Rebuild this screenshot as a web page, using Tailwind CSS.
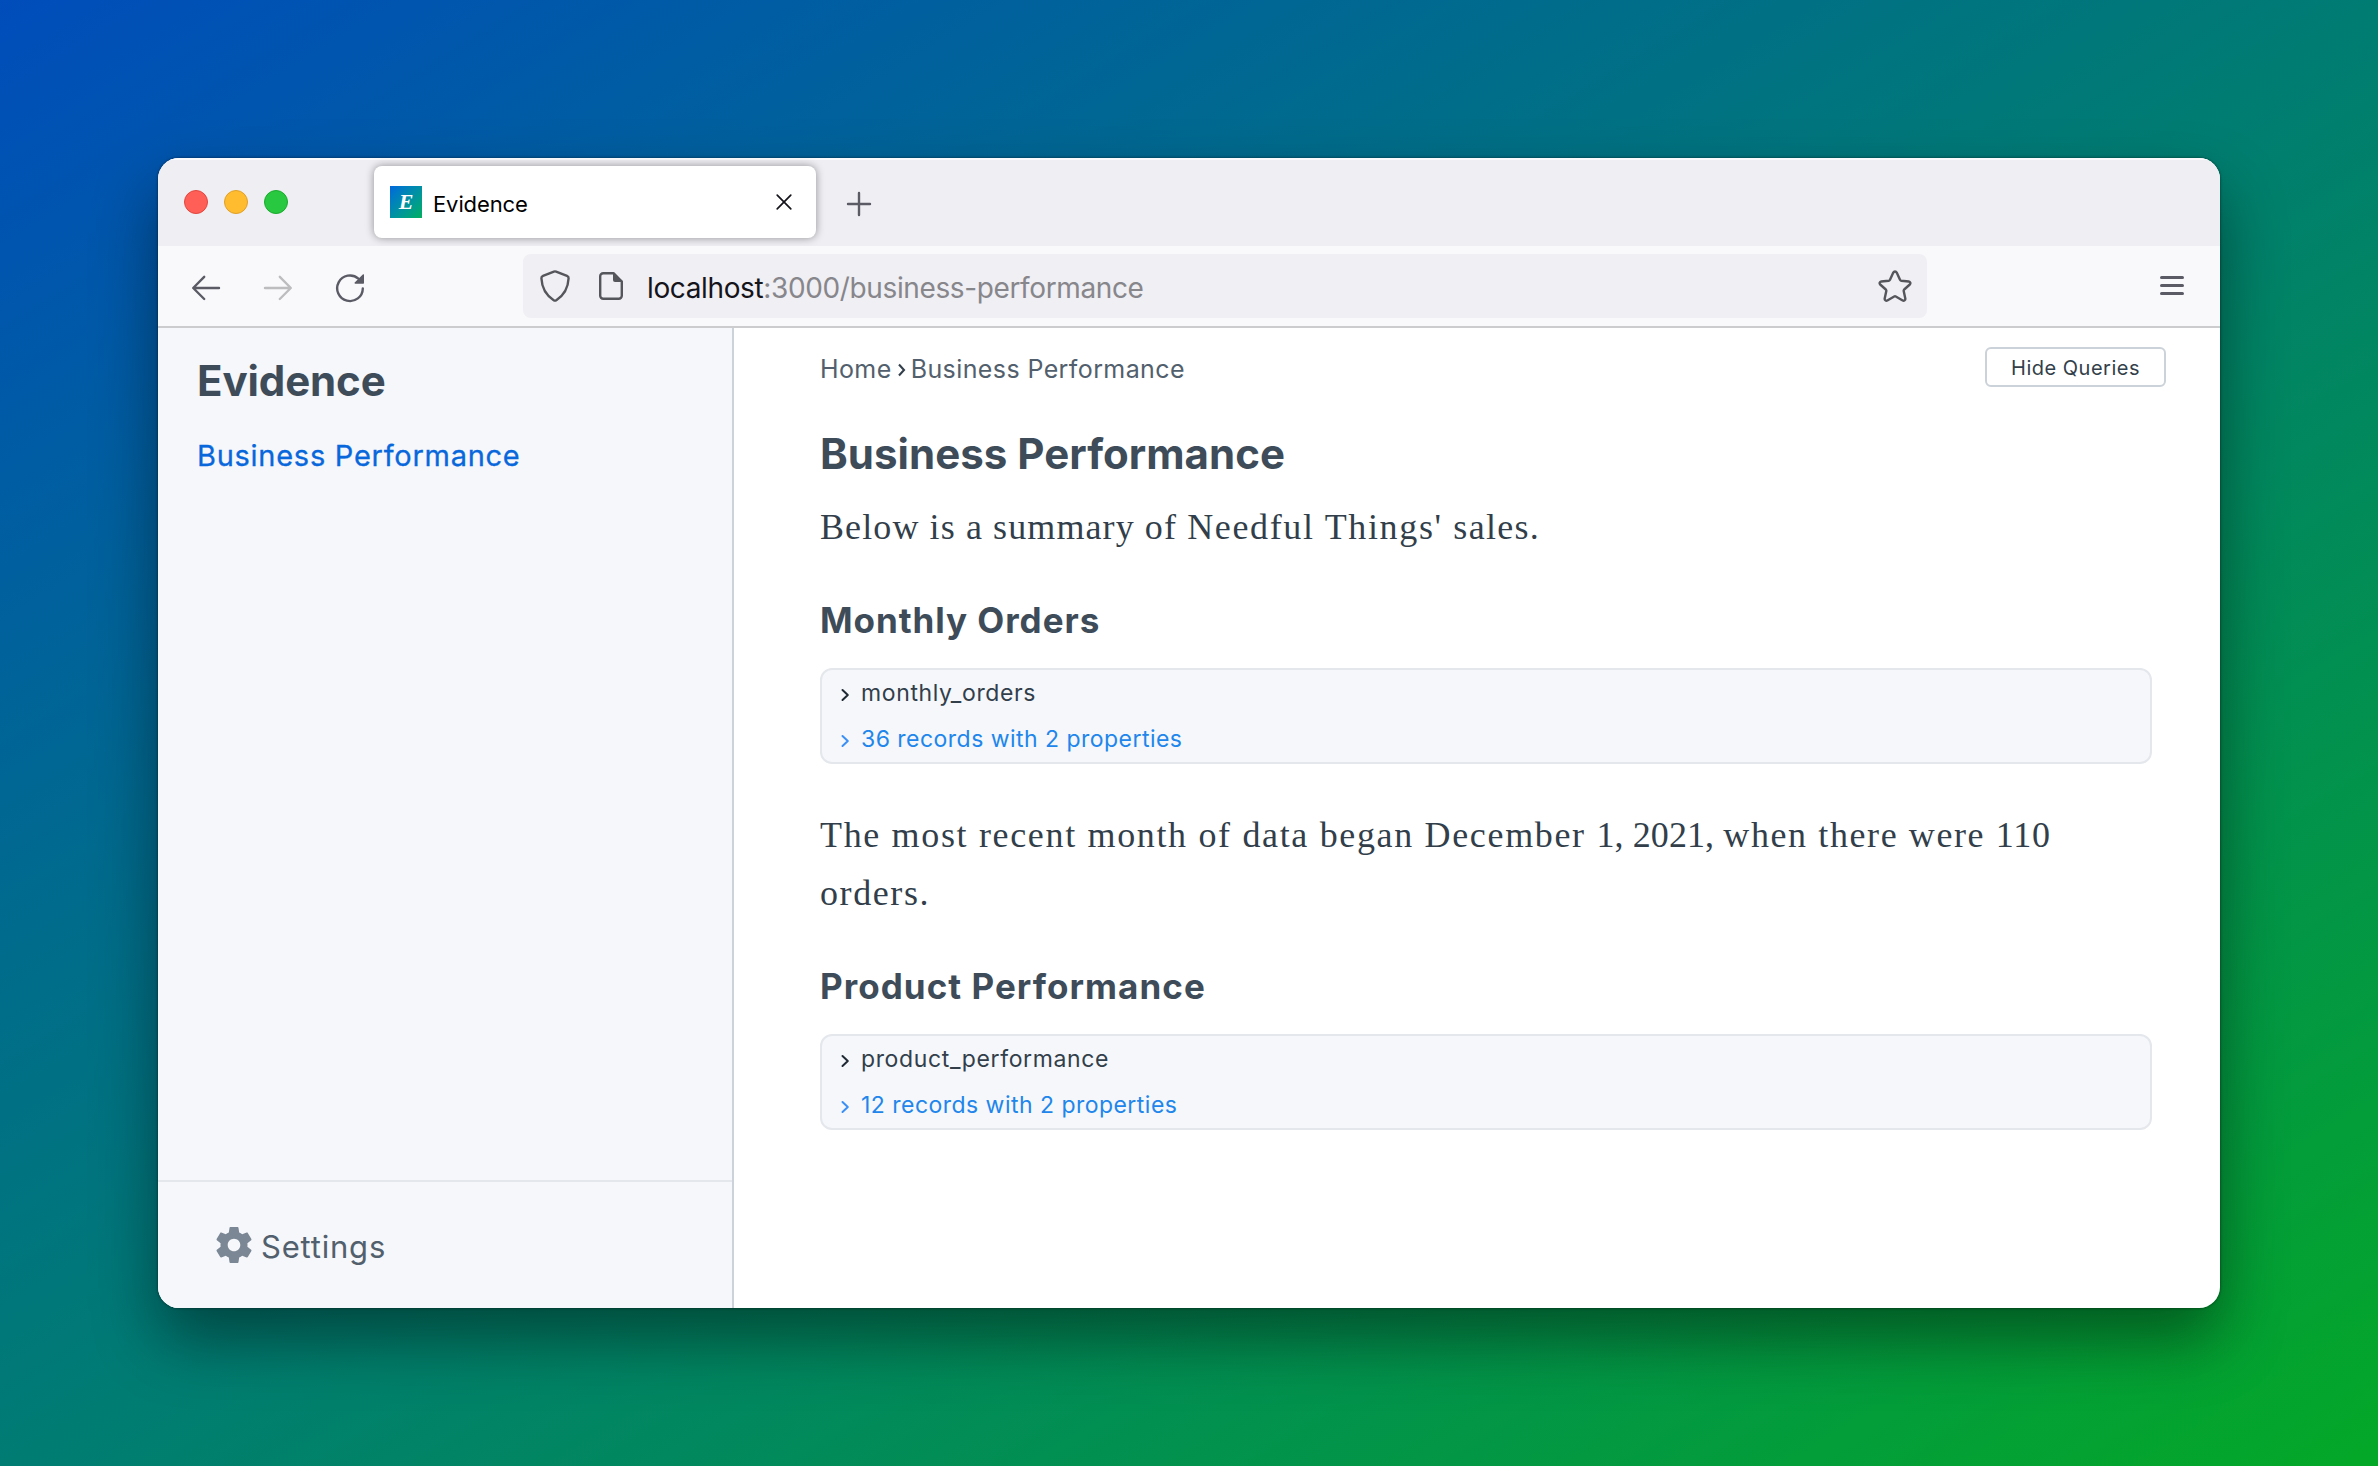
<!DOCTYPE html>
<html lang="en">
<head>
<meta charset="utf-8">
<title>Evidence</title>
<script src="https://cdn.jsdelivr.net/npm/@tailwindcss/browser@4"></script>
</head>
<body class="font-['Inter',sans-serif]">
<div class="w-[2378px] h-[1466px] overflow-hidden pt-[158px] pl-[158px] bg-[linear-gradient(to_bottom_right,#004dbb,#007c73_50%,#04a827)]">
  <div class="w-[2062px] h-[1150px] rounded-[21px] shadow-[0_0_3px_rgba(0,0,0,0.55),0_32px_64px_rgba(0,0,0,0.43)]">
    <div class="w-full h-full rounded-[21px] overflow-hidden flex flex-col bg-white">

      <!-- Tab strip -->
      <div class="h-[88px] shrink-0 flex items-center bg-[#efeef3] shadow-[inset_0_2px_0_#fafafc] pl-[26px]">
        <div class="flex gap-4">
          <span class="size-6 rounded-full bg-[#ff5f57] border border-[#e2463f]"></span>
          <span class="size-6 rounded-full bg-[#febc2e] border border-[#e0a028]"></span>
          <span class="size-6 rounded-full bg-[#28c840] border border-[#1aab2c]"></span>
        </div>
        <div class="ml-[86px] w-[442px] h-[72px] rounded-lg bg-white shadow-[0_0_8px_rgba(0,0,0,0.4)] flex items-center pl-4">
          <span class="size-8 bg-linear-135 from-[#0a66dc] to-[#0fae5c] flex items-center justify-center text-white font-['Liberation_Serif',serif] font-bold italic text-[22px] leading-8">E</span>
          <span class="ml-[11px] text-[22px] leading-7 tracking-[-0.1px] text-black pt-[3px]">Evidence</span>
          <svg class="ml-auto mr-[23px]" width="18" height="18" viewBox="0 0 18 18" fill="none" stroke="#15141a" stroke-width="1.7" stroke-linecap="round"><path d="M2.2 2.2 15.8 15.8M15.8 2.2 2.2 15.8"/></svg>
        </div>
        <svg class="ml-[30px] mt-[3px]" width="26" height="26" viewBox="0 0 26 26" fill="none" stroke="#5b5b66" stroke-width="2.4" stroke-linecap="round"><path d="M13 2v22M2 13h22"/></svg>
      </div>

      <!-- Navigation bar -->
      <div class="h-[82px] shrink-0 flex items-center bg-[#f9f9fb] border-b-2 border-[#cccccf] pl-[32px]">
        <svg width="32" height="32" viewBox="0 0 32 32" fill="none" stroke="#5b5b66" stroke-width="2.4" stroke-linecap="round" stroke-linejoin="round" class="mt-[3px]"><path d="M29 16H3.4M14.2 4.8 3.2 16l11 11"/></svg>
        <svg width="32" height="32" viewBox="0 0 32 32" fill="none" stroke="#bdbdc0" stroke-width="2.4" stroke-linecap="round" stroke-linejoin="round" class="ml-10 mt-[3px]"><path d="M3 16h25.6M17.8 4.8l11 11.2-11 11"/></svg>
        <svg width="32" height="32" viewBox="0 0 32 32" class="ml-10 mt-1"><path d="M28.8 16.4A12.8 12.8 0 1 1 24.4 6.6" fill="none" stroke="#5b5b66" stroke-width="2.4" stroke-linecap="round"/><path d="M30 3v8a.7.7 0 0 1-.7.7h-8.1a.7.7 0 0 1-.5-1.2l8.1-8A.7.7 0 0 1 30 3z" fill="#5b5b66"/></svg>

        <div class="ml-[157px] w-[1404px] h-16 rounded-lg bg-[#efeff4] flex items-center pl-4">
          <svg width="32" height="34" viewBox="0 0 32 34" fill="none" stroke="#55555c" stroke-width="2.4" stroke-linejoin="round"><path d="M14.9 2.6 4 6.9C3 7.3 2.3 8.2 2.4 9.3c.4 8.2 3.3 16.2 12.3 21.9.8.5 1.8.5 2.6 0 9-5.7 11.9-13.7 12.3-21.9.1-1.1-.6-2-1.6-2.4L17.1 2.6a3 3 0 0 0-2.2 0z"/></svg>
          <svg width="26" height="30" viewBox="0 0 26 30" class="ml-[27px]"><path d="M15.5 2.2H5.2a3 3 0 0 0-3 3v19.6a3 3 0 0 0 3 3h15.600a3 3 0 0 0 3-3V10.5z" fill="none" stroke="#55555c" stroke-width="2.4" stroke-linejoin="round"/><path d="M15 1.500V9a2 2 0 0 0 2 2h7.600V10z" fill="#55555c"/></svg>
          <span class="ml-[23px] text-[28px] leading-9 tracking-[-0.37px] text-[#87868b] pt-[3px]"><span class="text-[#15141a]">localhost</span>:3000/business-performance</span>
          <svg width="34" height="34" viewBox="0 0 34 34" fill="none" stroke="#55555c" stroke-width="2.4" stroke-linejoin="round" class="ml-auto mr-[15px]"><path d="M15.3 3.6 12 10.8a1.6 1.6 0 0 1-1.2.9l-7.600.8c-1.500.2-2.100 2-1 3l5.600 5c.4.4.6 1 .5 1.500l-1.600 7.600c-.3 1.500 1.300 2.600 2.600 1.900l6.900-4a1.600 1.600 0 0 1 1.600 0l6.900 4c1.300.7 2.900-.4 2.600-1.900l-1.600-7.600c-.1-.5.1-1.100.5-1.500l5.600-5c1.100-1 .5-2.800-1-3l-7.600-.8a1.600 1.600 0 0 1-1.200-.9l-3.300-7.200c-.7-1.400-2.700-1.400-3.400 0z"/></svg>
        </div>
        <div class="ml-auto mr-9 -mt-px w-6 flex flex-col gap-[5.5px]">
          <span class="h-[2.5px] rounded-full bg-[#5b5b66]"></span>
          <span class="h-[2.5px] rounded-full bg-[#5b5b66]"></span>
          <span class="h-[2.5px] rounded-full bg-[#5b5b66]"></span>
        </div>
      </div>

      <!-- Page -->
      <div class="flex-1 flex min-h-0">
        <aside class="w-[576px] shrink-0 flex flex-col bg-[#f5f7fb] border-r-2 border-[#cbd2d9]">
          <div class="flex-1 pt-7 pl-[39px]">
            <h2 class="text-[42px] leading-[50px] font-bold tracking-[-0.1px] text-[#3e4c59]">Evidence</h2>
            <a class="block mt-[30px] text-[29px] leading-10 tracking-[0.73px] text-[#0967dc] [-webkit-text-stroke:0.3px_#0967dc]">Business Performance</a>
          </div>
          <div class="h-32 border-t-2 border-[#e4e7eb] flex items-center pl-[58px]">
            <svg width="36" height="36" viewBox="2 2 20 20" fill="#7b8794"><path d="M19.43 12.98c.04-.32.07-.64.07-.98s-.03-.66-.07-.98l2.11-1.65c.19-.15.24-.42.12-.64l-2-3.46c-.12-.22-.39-.3-.61-.22l-2.49 1c-.52-.4-1.08-.73-1.69-.98l-.38-2.65C14.46 2.18 14.25 2 14 2h-4c-.25 0-.46.18-.49.42l-.38 2.65c-.61.25-1.17.59-1.69.98l-2.49-1c-.23-.09-.49 0-.61.22l-2 3.46c-.13.22-.07.49.12.64l2.11 1.65c-.04.32-.07.65-.07.98s.03.66.07.98l-2.11 1.65c-.19.15-.24.42-.12.64l2 3.46c.12.22.39.3.61.22l2.49-1c.52.4 1.08.73 1.69.98l.38 2.65c.03.24.24.42.49.42h4c.25 0 .46-.18.49-.42l.38-2.65c.61-.25 1.17-.59 1.69-.98l2.49 1c.23.09.49 0 .61-.22l2-3.46c.12-.22.07-.49-.12-.64zM12 15.5c-1.93 0-3.5-1.57-3.5-3.5s1.57-3.5 3.5-3.5 3.5 1.57 3.5 3.5-1.57 3.5-3.5 3.5z"/></svg>
            <span class="ml-[9px] pt-[3px] text-[31px] leading-9 tracking-[0.8px] text-[#52606d]">Settings</span>
          </div>
        </aside>

        <main class="flex-1 pt-[19px] pl-[86px]">
          <div class="h-10 flex items-center justify-between pr-[54px]">
            <nav class="flex items-center pt-[4px] text-[25px] leading-8 tracking-[0.4px] text-[#52606d]">
              <span>Home</span>
              <svg class="ml-[4px] mt-px" width="12" height="16" viewBox="0 0 12 16" fill="none" stroke="#323f4b" stroke-width="2.1"><path d="M3 2.5 8 8l-5 5.5"/></svg>
              <span class="ml-[3px]">Business Performance</span>
            </nav>
            <button class="w-[181px] h-10 rounded-md border-2 border-[#cbd2d9] bg-white text-[20px] leading-6 tracking-[0.5px] text-[#323f4b] pt-px">Hide Queries</button>
          </div>

          <h1 class="mt-[42px] text-[42px] leading-[50px] font-bold tracking-[0.03px] text-[#3e4c59]">Business Performance</h1>
          <p class="mt-[19px] font-['Liberation_Serif',serif] text-[36px] leading-[58px] tracking-[1.3px] text-[#323f4b]"><span class="tracking-[1.1px]">Below is a summary of </span><span class="tracking-[1.65px]">Needful Things' </span>sales.</p>

          <h2 class="mt-[43px] text-[35px] leading-[42px] font-bold tracking-[0.95px] text-[#3e4c59]">Monthly Orders</h2>
          <div class="mt-[27px] w-[1332px] h-24 rounded-xl border-2 border-[#e4e7eb] bg-[#f5f7fb] pl-[17px] text-[23px] leading-[46px]">
            <div class="flex items-center tracking-[0.63px] text-[#323f4b]">
              <svg class="mt-[3px] mr-[10px]" width="12" height="16" viewBox="0 0 12 16" fill="none" stroke="#1f2933" stroke-width="2" stroke-linecap="round" stroke-linejoin="round"><path d="M3.5 3 8.8 8l-5.3 5"/></svg>monthly_orders
            </div>
            <div class="flex items-center tracking-[0.47px] text-[#2186eb]">
              <svg class="mt-[3px] mr-[10px]" width="12" height="16" viewBox="0 0 12 16" fill="none" stroke="#3b8ff5" stroke-width="2" stroke-linecap="round" stroke-linejoin="round"><path d="M3.5 3 8.8 8l-5.3 5"/></svg>36 records with 2 properties
            </div>
          </div>

          <p class="mt-[42px] w-[1332px] font-['Liberation_Serif',serif] text-[36px] leading-[58px] tracking-[1.6px] text-[#323f4b]"><span class="tracking-[1.66px]">The most recent month of data began December </span><span class="tracking-[0.1px]">1, 2021, </span>when there were <span class="tracking-[0.8px]">110</span> orders.</p>

          <h2 class="mt-[43px] text-[35px] leading-[42px] font-bold tracking-[1.05px] text-[#3e4c59]">Product Performance</h2>
          <div class="mt-[27px] w-[1332px] h-24 rounded-xl border-2 border-[#e4e7eb] bg-[#f5f7fb] pl-[17px] text-[23px] leading-[46px]">
            <div class="flex items-center tracking-[0.63px] text-[#323f4b]">
              <svg class="mt-[3px] mr-[10px]" width="12" height="16" viewBox="0 0 12 16" fill="none" stroke="#1f2933" stroke-width="2" stroke-linecap="round" stroke-linejoin="round"><path d="M3.5 3 8.8 8l-5.3 5"/></svg>product_performance
            </div>
            <div class="flex items-center tracking-[0.47px] text-[#2186eb]">
              <svg class="mt-[3px] mr-[10px]" width="12" height="16" viewBox="0 0 12 16" fill="none" stroke="#3b8ff5" stroke-width="2" stroke-linecap="round" stroke-linejoin="round"><path d="M3.5 3 8.8 8l-5.3 5"/></svg>12 records with 2 properties
            </div>
          </div>
        </main>
      </div>
    </div>
  </div>
</div>
</body>
</html>
